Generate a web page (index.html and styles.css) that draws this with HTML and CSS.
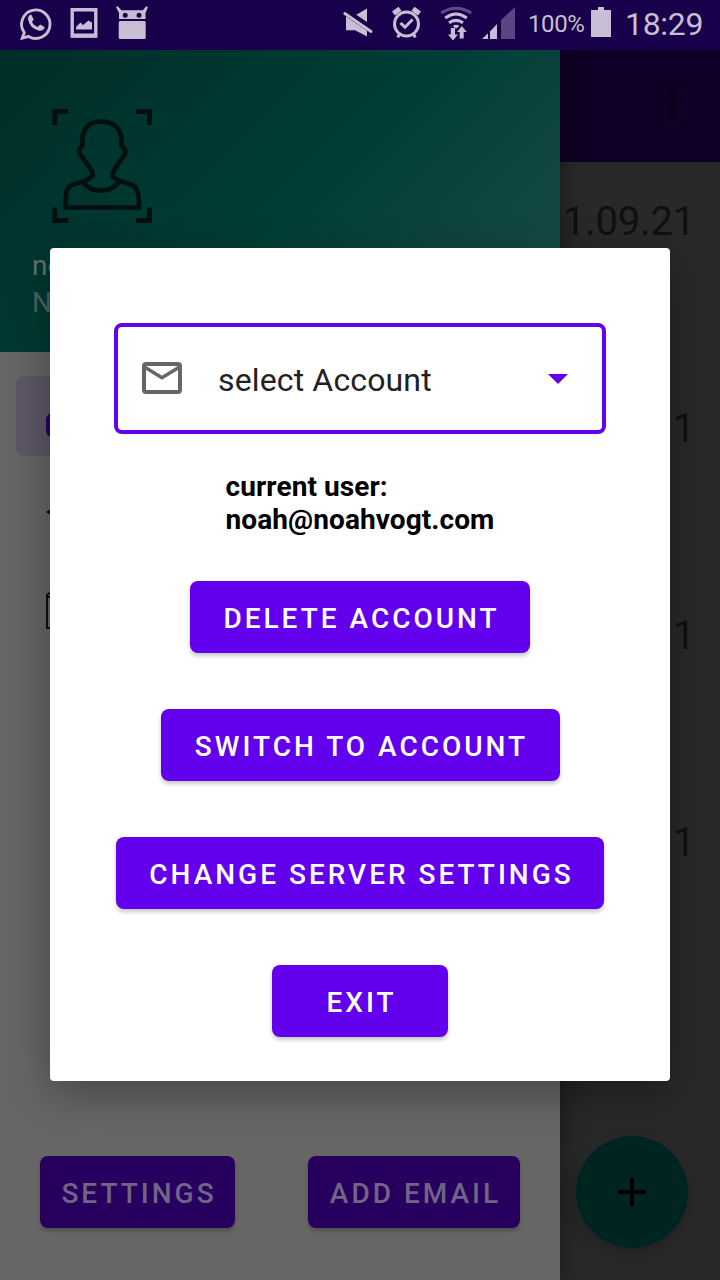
FILE: index.html
```html
<!DOCTYPE html>
<html lang="en">
<head>
<meta charset="utf-8">
<title>Accounts</title>
<link rel="stylesheet" href="styles.css">
</head>
<body>
<div class="screen">
  <header class="status">
    <svg class="status-left" width="150" height="50" viewBox="0 0 150 50">
      <g fill="none" stroke="#c7bed5">
        <path d="M24.3 32.5L22.3 38.2L28.6 36.4A14.2 14.2 0 1 0 24.3 32.5Z" stroke-width="2.9"/>
        <path d="M72.200 9.800H95.800V36H72.200Z" stroke-width="3.400"/>
      </g>
      <g fill="#c7bed5">
        <path d="M31.200 14.600L33.700 19.600L31.900 22.200Q34.200 25.800 37.600 27.100L40.200 24.600L44.600 27Q44 31 39.200 30.800Q29.300 28.300 28 19Q28 15.300 31.200 14.600Z"/>
        <path d="M72 33.500H96V37.600H72ZM76 29.500V27L80.500 22.500L83 25L88.500 20.500L92 22.500V29.500Z"/>
        <path fill-rule="evenodd" d="M116 7L117.800 6.300L121.300 10.200H143L146.200 6.300L148 7.200L145.500 13V19H119V13ZM122.700 15.200A2.500 2.500 0 1 0 127.700 15.200A2.500 2.500 0 1 0 122.700 15.200ZM136.500 15.200A2.500 2.500 0 1 0 141.500 15.200A2.500 2.500 0 1 0 136.500 15.200Z"/>
        <rect x="118.700" y="21" width="27" height="18" rx="1.500"/>
      </g>
    </svg>
    <svg class="status-right" width="176" height="50" viewBox="340 0 176 50">
      <g fill="#c7bed5">
        <path d="M346 15.500H355L367 8.500V36.500L355 30.300H346Z"/>
        <path d="M344.500 11L373 30.500" stroke="#19004a" stroke-width="7"/>
        <path d="M344.800 13.500L371 31.500" stroke="#c7bed5" stroke-width="2.900" stroke-linecap="round"/>
        <path d="M482 39L488 33.300V39ZM490 31.500L497 24V39H490Z"/>
        <path d="M450.800 28H455V34.500H458L453 40.500L448 34.500H450.800ZM459.700 38.500V32H457L461.800 26L466.800 32H463.700V38.500Z"/>
      </g>
      <g fill="none" stroke="#c7bed5" stroke-width="3">
        <circle cx="406.500" cy="24" r="12"/>
        <path d="M400.500 23L405 27.200L412.500 19.500"/>
        <path d="M393.500 13.500L400 8.700M413 8.700L419.500 13.500" stroke-width="5"/>
        <path d="M399.300 34L397.800 37.500M413.700 34L415.200 37.500"/>
        <path d="M445.200 18Q456 10 466.800 18M449 22.800Q456 18 463 22.800"/>
        <path d="M441.200 13Q456 3.500 471.200 13" stroke="#5f4a86"/>
      </g>
      <path d="M452.800 26Q456 23.500 459.500 26L456 28.800Z" fill="#c7bed5"/>
      <path d="M501 20L515 7V39H501Z" fill="#5b4583"/>
    </svg>
    <span class="percent">100%</span>
    <svg class="battery" width="20" height="50" viewBox="0 0 20 50"><path d="M0 10H7V7H13V10H20V37H0Z" fill="#c7bed5"/></svg>
    <span class="clock">18:29</span>
  </header>

  <main class="app">
    <div class="appbar">
      <svg width="8" height="32" viewBox="0 0 8 32" fill="#080014"><circle cx="4" cy="4.500" r="3.500"/><circle cx="4" cy="15.500" r="3.500"/><circle cx="4" cy="28" r="3.500"/></svg>
    </div>
    <ul class="dates">
      <li>1.09.21</li>
      <li>1</li>
      <li>1</li>
      <li>1</li>
    </ul>
    <button class="fab" aria-label="Add">
      <svg width="28" height="28" viewBox="0 0 28 28"><path d="M14 0V28M0 14H28" stroke="#000" stroke-width="4"/></svg>
    </button>
  </main>

  <aside class="drawer">
    <div class="profile">
      <svg width="104" height="118" viewBox="50 107 104 118" fill="none" stroke="#020f0d" stroke-width="4.600">
        <path d="M54.800 125V111.500H68M136 111.500H149.500V125M54.800 207.500V220.500H68M136 220.500H149.500V207.500" stroke-width="4.800"/>
        <path d="M82.500 146V141C82.500 127 90 121.500 101 121.500C112 121.500 121.500 127 121.500 141V146C126.500 149 126 154 122 158L112.500 173V177L119 180.500L132 185C138 187 139 195 139 207.500H65.500C65.500 195 66 187 72 185L86 180.500L92.500 176V172L83 158C78 153 78 149 82.500 146Z"/>
        <path d="M83 181.500C91 194 110 194 120 181"/>
      </svg>
      <p class="profile-name">no</p>
      <p class="profile-mail">No</p>
    </div>
    <nav class="menu">
      <div class="item selected"><svg width="36" height="32" viewBox="0 0 36 32"><path d="M0 10Q0 7 3 5L8 0H36V28H6Q0 27 0 21Z" fill="#280060"/></svg></div>
      <div class="item"><svg width="36" height="32" viewBox="0 0 36 32"><path d="M0 16L6 12V20Z" fill="#111"/></svg></div>
      <div class="item"><svg class="page-icon" width="36" height="40" viewBox="0 0 36 40"><path d="M34 37H1V4L5 1H34M1 6H10" fill="none" stroke="#111" stroke-width="2"/></svg></div>
    </nav>
    <div class="drawer-actions">
      <button class="btn dim settings">SETTINGS</button>
      <button class="btn dim add">ADD EMAIL</button>
    </div>
  </aside>

  <section class="dialog">
    <div class="select">
      <svg class="mail" width="40" height="32" viewBox="0 0 40 32" fill="none" stroke="#666" stroke-width="4"><rect x="2" y="2" width="36" height="28" rx="2"/><path d="M2.500 5L20 15.800L37.500 5" stroke-width="3.500"/></svg>
      <span class="select-text">select Account</span>
      <svg width="20" height="10" viewBox="0 0 20 10"><path d="M0 0H20L10 10Z" fill="#6200ee"/></svg>
    </div>
    <p class="current">current user:<br>noah@noahvogt.com</p>
    <div class="actions">
      <button class="btn delete">DELETE ACCOUNT</button>
      <button class="btn switch">SWITCH TO ACCOUNT</button>
      <button class="btn server">CHANGE SERVER SETTINGS</button>
      <button class="btn exit">EXIT</button>
    </div>
  </section>
</div>
</body>
</html>
```

FILE: styles.css
```css
* { box-sizing: border-box; }
body, p, ul { margin: 0; padding: 0; }
body { font-family: Roboto, sans-serif; }
svg { display: block; flex: none; }

.screen {
  position: relative;
  width: 720px;
  height: 1280px;
  overflow: hidden;
  display: flex;
  flex-direction: column;
  background: #292929;
}

.status {
  height: 50px;
  flex: none;
  display: flex;
  align-items: center;
  background: #19004a;
  color: #c7bed5;
}
.status-right { margin-left: 190px; }
.percent { width: 75px; padding: 0 0 2px 12px; font-size: 24px; letter-spacing: -0.4px; }
.clock { margin-left: 14px; padding-bottom: 3px; font-size: 32px; letter-spacing: -0.3px; }

.app { flex: 1; display: flex; flex-direction: column; }
.appbar {
  height: 112px;
  display: flex;
  align-items: center;
  justify-content: flex-end;
  padding-right: 44px;
  background: #110025;
}
.dates {
  list-style: none;
  padding: 36px 25px 0 0;
  color: #101010;
  font-size: 40px;
  line-height: 48px;
  letter-spacing: -0.2px;
  text-align: right;
}
.dates li { height: 207px; }
.fab {
  width: 112px;
  height: 112px;
  margin: auto 32px 32px auto;
  display: grid;
  place-items: center;
  border: 0;
  border-radius: 50%;
  background: #002520;
  box-shadow: 0 6px 16px rgba(0, 0, 0, .22);
}

.drawer {
  position: absolute;
  top: 50px;
  left: 0;
  width: 560px;
  height: 1230px;
  display: flex;
  flex-direction: column;
  background: #666;
  box-shadow: 4px 0 22px rgba(0, 0, 0, .35);
  clip-path: inset(0 -40px 0 0);
}
.profile {
  height: 302px;
  padding: 57px 0 0 32px;
  background: linear-gradient(135deg, #002d28 0%, #003d36 50%, #1c4e48 100%);
  font-size: 28px;
  line-height: 34px;
}
.profile svg { margin-left: 18px; }
.profile-name { margin-top: 24px; color: #65716f; }
.profile-mail { margin-top: 3px; color: #4d6461; }

.menu { padding: 24px 16px; display: grid; gap: 16px; }
.item { height: 80px; padding-left: 30px; display: flex; align-items: center; border-radius: 8px; }
.selected { background: #5c5666; }
.selected svg { margin-top: 17px; }
.page-icon { margin-top: 6px; }

.drawer-actions { margin-top: auto; padding: 0 40px 52px; display: flex; justify-content: space-between; }

.btn {
  height: 72px;
  padding: 3px 0 0 3px;
  border: 0;
  border-radius: 8px;
  background: #6200ee;
  color: #fff;
  font: 500 28px/34px Roboto, sans-serif;
  letter-spacing: 3px;
  white-space: nowrap;
  box-shadow: 0 3px 4px rgba(0, 0, 0, .22);
}
.dim { background: #27005f; color: #706584; }
.settings { width: 195px; }
.add { width: 212px; }

.dialog {
  position: absolute;
  left: 50px;
  top: 248px;
  width: 620px;
  height: 833px;
  padding: 75px 64px 44px;
  display: flex;
  flex-direction: column;
  align-items: center;
  border-radius: 4px;
  background: #fff;
  box-shadow: 0 12px 44px rgba(0, 0, 0, .33);
}
.select {
  width: 492px;
  height: 111px;
  padding: 0 34px 0 24px;
  display: flex;
  align-items: center;
  border: 4px solid #6200ee;
  border-radius: 8px;
}
.mail { margin-bottom: 2px; }
.select-text { flex: 1; padding: 3px 0 0 36px; font-size: 32px; line-height: 38px; letter-spacing: .14px; color: #212121; }
.current { margin-top: 36px; font-size: 28px; font-weight: 700; line-height: 33px; letter-spacing: .08px; color: #000; }
.actions { margin-top: auto; display: flex; flex-direction: column; align-items: center; gap: 56px; }
.delete { width: 340px; }
.switch { width: 399px; }
.server { width: 488px; }
.exit { width: 176px; }
```
